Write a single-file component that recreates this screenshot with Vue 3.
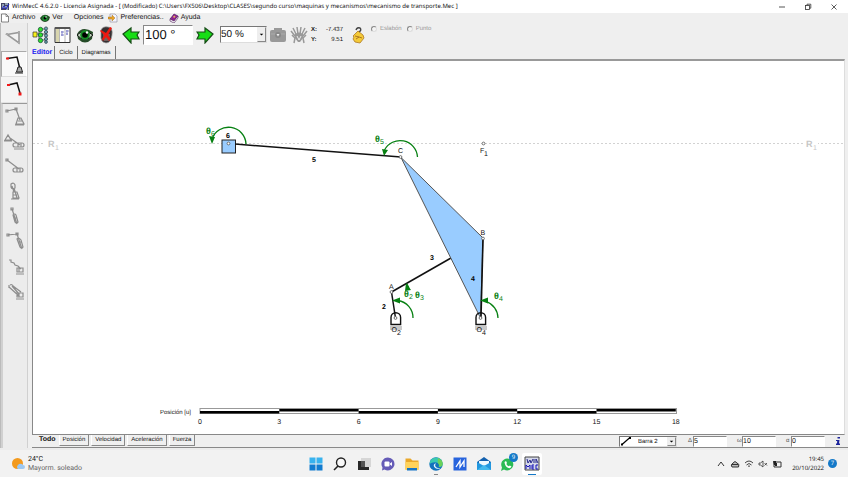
<script setup>
import { ref } from 'vue'

const menus = [
  { label: 'Archivo', icon: 'file' },
  { label: 'Ver', icon: 'eye' },
  { label: 'Opciones', icon: '' },
  { label: 'Preferencias..', icon: 'prefs' },
  { label: 'Ayuda', icon: 'book' },
]
const views = ['Editor', 'Ciclo', 'Diagramas']
const results = ['Todo', 'Posición', 'Velocidad', 'Aceleración', 'Fuerza']
const view = ref('Editor')
const result = ref('Todo')
const angle = ref('100 °')
const zoom = ref('50 %')
const link = ref('Barra 2')
const params = ref([
  { id: 'delta', symbol: 'Δ', value: '5' },
  { id: 'omega', symbol: 'ω', value: '10' },
  { id: 'alpha', symbol: 'α', value: '0' },
])

const pairTools = [
  { name: 'Biela', d: 'M6 5L15 3L19 14 M5 4h2v2H5z M14 2h2v2h-2z M17 12h3l3 6h-8z M14 19h9 M17 15h4' },
  { name: 'Corredera', d: 'M4 9l3-5 3 5z M3 10h8 M9 7l10 7 M14 12h7a2 2 0 0 1 0 4h-7a2 2 0 0 1 0-4z M17 12v4 M20 12v4 M13 18h10' },
  { name: 'Corredera libre', d: 'M6 4l12 9 M5 3h2v2H5z M14 12h6a2 2 0 0 1 0 4h-6a2 2 0 0 1 0-4z M16 12v4 M19 12v4' },
  { name: 'Deslizadera fija', d: 'M10 3q3-2 4 1v3q-3 2-4-1z M13 7l3 10 M11 5l2 6 M12 11h4l2 6h-6z M10 18h8 M12 14h4' },
  { name: 'Deslizadera', d: 'M11 3l5 15 M10 2h2v2h-2z M12 9q2-2 3 0l2 7q-2 2-3 0z M13 12h3' },
  { name: 'Biela con guía', d: 'M7 4l9-1 5 15 M6 3h2v2H6z M15 2h2v2h-2z M16 8q2-2 4 1l2 7q-2 2-3 0z M17 11h3' },
  { name: 'Guía inclinada', d: 'M8 4h2v2l3 1 1 2 3 1 3 3 M16 12h6v4h-6z M18 12v4 M15 18h8' },
  { name: 'Guía doble', d: 'M9 4q2-1 3 1l8 6 M8 6l10 9 M8 4v3 M11 5l7 8 M16 12h6v4h-6z M18 12v4 M15 18h8' },
]

const ticks = [0, 3, 6, 9, 12, 15, 18]
const tickX = (i) => 200 + i * 79.3
</script>

<template>
  <div class="screen">
    <header class="titlebar">
      <svg class="app-icon" viewBox="0 0 9 9"><path fill="#446" d="M0 1h8v7H0z" /><path stroke="#dff" d="M1 3h2M4 2h3M1 5h6M5 7h2" /><path stroke="#22c" d="M1 7l2-3 2 3 3-5" fill="none" /></svg>
      <h1>WinMecC 4.6.2.0 - Licencia Asignada - [ (Modificado) C:\Users\FX506\Desktop\CLASES\segundo curso\maquinas y mecanismos\mecanismo de transporte.Mec ]</h1>
      <div class="window-buttons">
        <button aria-label="Minimizar"><svg viewBox="0 0 8 8"><path d="M1 4h6" stroke="#555" /></svg></button>
        <button aria-label="Restaurar"><svg viewBox="0 0 8 8" fill="none" stroke="#333" stroke-width=".8"><rect x="1.5" y="2.5" width="4" height="4" /><path d="M3 2.500V1.200h3.800v4H5.500" /></svg></button>
        <button aria-label="Cerrar"><svg viewBox="0 0 8 8"><path d="M1.500 1.500l5 5m0-5l-5 5" stroke="#333" stroke-width=".8" /></svg></button>
      </div>
    </header>

    <nav class="menubar">
      <button v-for="m in menus" :key="m.label" :class="{ plain: !m.icon }">
        <svg v-if="m.icon === 'file'" viewBox="0 0 10 10"><path d="M1.500 1h4.500l2.500 2.500V9h-7z" fill="#fff" stroke="#555" stroke-width=".7" /><path d="M6 1v2.500h2.500" fill="none" stroke="#555" stroke-width=".6" /></svg>
        <svg v-else-if="m.icon === 'eye'" viewBox="0 0 10 10"><path d="M0 5Q4-1 10 4L9 7Q5 11 1 7z" fill="#234b24" /><circle cx="5" cy="5.200" r="2.600" fill="#1e9a35" /><circle cx="5" cy="5" r="1.500" /><circle cx="6" cy="4" r=".7" fill="#fff" /></svg>
        <svg v-else-if="m.icon === 'prefs'" viewBox="0 0 10 10"><path d="M2 1h5l2 2v6H2z" fill="#f4f6ff" stroke="#889" stroke-width=".6" /><path d="M0 4h4V2l3 3-3 3V6H0z" fill="#e9a42a" stroke="#96651a" stroke-width=".4" /></svg>
        <svg v-else-if="m.icon === 'book'" viewBox="0 0 10 10"><path d="M1 6l4-5 4 2-4 6z" fill="#8f2392" stroke="#431152" stroke-width=".6" /><path d="M1 6v2l4 2 4-5V3L5 8z" fill="#fff" stroke="#431152" stroke-width=".6" /><path d="M4 4l2-1-1 2" stroke="#ffdf48" fill="none" stroke-width=".7" /></svg>
        {{ m.label }}
      </button>
    </nav>

    <div class="workspace">
      <aside class="palette">
        <button class="tool tall" aria-label="Polígono"><svg viewBox="0 0 28 26"><path d="M7 10.500L19 8.500V19z" fill="#f2f2f2" stroke="#999" stroke-width="1.600" /><path d="M6 9h2v2H6zM18 7h2v2h-2zM18 18h2v2h-2z" fill="#aaa" /></svg></button>
        <button class="tool active" aria-label="Barra fija"><svg viewBox="0 0 28 26"><path d="M7 7.500l10-1.500 3 12" fill="none" stroke="#111" stroke-width="1.500" /><path d="M6 6.500h3v2H6z" fill="#f01818" /><path d="M18 16h3l1.500 5h-6z" fill="#aaa" stroke="#222" /><path d="M15 22h8" stroke="#222" /></svg></button>
        <button class="tool lit" aria-label="Barra"><svg viewBox="0 0 28 26"><path d="M8 8l9-2 3 10" fill="none" stroke="#111" stroke-width="1.500" /><path d="M7 7h3v2H7zM18.500 15.500h3v3h-3z" fill="#f01818" /></svg></button>
        <div class="pair-tools">
          <button v-for="t in pairTools" :key="t.name" class="tool small" :aria-label="t.name">
            <svg viewBox="0 0 28 22"><path :d="t.d" fill="none" stroke="#8d8d8d" stroke-width="1.200" /></svg>
          </button>
        </div>
      </aside>

      <main class="main">
        <div class="toolbar">
          <div class="group icons">
            <button aria-label="Mecanismo"><svg viewBox="0 0 18 18"><path d="M3 8h12M7 3v12M7 3h6M7 14h6" stroke="#444" stroke-width=".8" /><path d="M1 6h4v5H1z" fill="#f6ef1a" stroke="#333" stroke-width=".7" /><g fill="#31df2e" stroke="#143" stroke-width=".7"><circle cx="8.500" cy="3.500" r="2.200" /><circle cx="8.500" cy="9" r="2.200" /><circle cx="8.500" cy="14.500" r="2.200" /></g><g fill="#6ca6b1" stroke="#234" stroke-width=".7"><circle cx="14" cy="2.500" r="1.600" /><circle cx="14" cy="6" r="1.600" /><circle cx="14" cy="9.500" r="1.600" /><circle cx="14" cy="13" r="1.600" /><circle cx="14" cy="16" r="1.400" /></g></svg></button>
            <button aria-label="Tabla"><svg viewBox="0 0 18 18"><path d="M1 1.500h15v15H1z" fill="#fff" stroke="#333" /><path d="M1 2h15" stroke="#555" stroke-width="2" /><path d="M2 3h3v13H2z" fill="#d8d5ae" /><path d="M5.500 3v13M11 3v13" stroke="#888" stroke-width=".6" /><path d="M7 6h3M12 5h3M7 9h3M12 8h2M8 5v5M13 4v5" stroke="#5558b5" stroke-width=".7" /></svg></button>
            <button aria-label="Ver"><svg viewBox="0 0 18 18"><path d="M1 8Q6-1 17 6L16 13Q9 20 2 13z" fill="#254c28" /><path d="M1 9Q8 2 17 9Q9 18 1 9z" fill="#bdd6bb" stroke="#111" /><circle cx="9" cy="9" r="4.800" fill="#168b25" /><circle cx="9" cy="9" r="2.800" /><circle cx="11" cy="6.500" r="1.200" fill="#fff" /></svg></button>
            <button aria-label="Quitar"><svg viewBox="0 0 18 18"><path d="M3 4Q5 0 10 1Q15 1 14 9Q13 17 8 17Q2 16 3 9z" fill="#363032" stroke="#999" stroke-width=".7" /><path d="M5 8h7l-1 7H6z" fill="#70605e" /><path d="M3 4l5 3 4-6 2 1-4 7 3 4-2 2-3-4-3 4-1-2 2-4-4-4z" fill="#ed1710" /></svg></button>
          </div>
          <div class="group stepper">
            <button aria-label="Paso atrás"><svg viewBox="0 0 18 18"><path d="M1 8l8-6v4h8l-2 3 2 4H9v4z" fill="#17dd16" stroke="#164d16" stroke-width="1.200" /></svg></button>
            <input v-model="angle" class="angle" aria-label="Ángulo" />
            <button aria-label="Paso adelante"><svg viewBox="0 0 18 18"><path d="M17 8L9 2v4H1l2 3-2 4h8v4z" fill="#17dd16" stroke="#164d16" stroke-width="1.200" /></svg></button>
          </div>
          <div class="picker zoom">
            <select v-model="zoom" aria-label="Escala"><option>50 %</option><option>100 %</option></select>
            <svg viewBox="0 0 8 8"><path d="M2 3h4L4 5z" /></svg>
          </div>
          <div class="group shots">
            <button aria-label="Captura"><svg viewBox="0 0 18 18"><rect x="1" y="4" width="16" height="12" rx="2" fill="#999" /><path d="M6 4.500V3h6v1.500" fill="none" stroke="#999" stroke-width="2" /><path d="M2 8h14" stroke="#aaa" /><circle cx="9" cy="9" r="3" fill="#888" /><path d="M7.500 8h3L9 10.500z" fill="#eee" /></svg></button>
            <button aria-label="Mover"><svg viewBox="0 0 18 18"><g fill="none" stroke="#999" stroke-width="1.500"><path d="M5 10L1 5M6 8L3 2M8 8L7 1M10 8l1-7M12 8l3-6M13 10l4-5" /><path d="M2 9l3 3-1 5M16 9l-3 3 1 5" /></g><path d="M5 8q4-3 8 0v4l-3 4H8l-3-4z" fill="#999" /><path d="M7 10l2 4 2-4" stroke="#eee" fill="none" /></svg></button>
          </div>
          <dl class="coords"><dt>X:</dt><dd>-7.437</dd><dt>Y:</dt><dd>9.51</dd></dl>
          <button class="hint" aria-label="Ayuda"><svg viewBox="0 0 14 18"><path d="M5 4q1-3 4-2 2 2-1 4l-1 2" fill="none" stroke="#444" stroke-width="1.400" /><path d="M2 10l5-5 5 4 1 3-4 5-5-1-2-3 1-2z" fill="#f4ca38" stroke="#ad7823" stroke-width=".8" /><path d="M4 10l4 1-3 2M8 11l3 1" stroke="#9a631c" fill="none" stroke-width=".8" /></svg></button>
          <fieldset class="targets" disabled>
            <label><input type="radio" name="target" />Eslabón</label>
            <label><input type="radio" name="target" />Punto</label>
          </fieldset>
        </div>

        <div class="tabs top">
          <button v-for="v in views" :key="v" :class="{ on: view === v }" @click="view = v">{{ v }}</button>
        </div>

        <div class="canvas">
          <svg viewBox="33 61 811 373" role="img" aria-label="Mecanismo de transporte">
            <path d="M33 143.500H844" stroke="#d2d2d2" stroke-dasharray="2 2" />
            <rect x="45" y="138" width="15" height="12" fill="#fff" /><rect x="803" y="138" width="15" height="12" fill="#fff" />
            <g class="ground"><text x="48" y="147">R</text><text x="806" y="147">R</text><text class="sub" x="55" y="150">1</text><text class="sub" x="813" y="150">1</text></g>

            <rect x="222" y="140" width="13.500" height="13" fill="#99ccff" stroke="#222" />
            <g class="rods"><path d="M235 144L401 157" /><path d="M391.500 292L451 258" /><path d="M391.500 292L395.500 318" /></g>
            <path d="M401 157.500L483 238L480.500 318z" fill="#99ccff" stroke="#555" />
            <path d="M483 238L481 318" stroke="#111" stroke-width="1.600" />

            <g fill="none" stroke="#111" stroke-width="1.400">
              <path d="M391 324.500v-7a4.800 4.800 0 0 1 9.600 0v7z" /><path d="M476 324.500v-7a4.800 4.800 0 0 1 9.600 0v7z" />
            </g>
            <g fill="#c9c9c9"><path d="M390 326h12v4h-12zM475 326h12v4h-12z" /></g>

            <g class="arcs">
              <path d="M246 144a17.500 17.500 0 0 0-34-5" /><path d="M417.500 157a17.500 17.500 0 0 0-33-7" />
              <path d="M413 318a17.500 17.500 0 0 0-15-17.500" /><path d="M498 318a17.500 17.500 0 0 0-12-16.500" />
              <path d="M409 290q0-3-2-6" />
            </g>
            <g fill="#078012"><path d="M209 136l6 1-3 7zM382 149l6 1-4 6zM392 300.500l8-3v6zM480 300.500l8-3v6zM406 283l5 7-6 1z" /></g>

            <g fill="#fff" stroke="#555" stroke-width=".8">
              <circle cx="228.500" cy="143.500" r="1.400" /><circle cx="400.500" cy="157" r="1.400" /><circle cx="483.500" cy="143.500" r="1.400" />
              <circle cx="483" cy="238.500" r="1.400" /><circle cx="391.500" cy="292" r="1.400" /><circle cx="395.500" cy="318" r="1.400" /><circle cx="480.500" cy="318" r="1.400" />
            </g>

            <g class="points">
              <text x="398" y="153">C</text><text x="480" y="153">F</text><text x="484" y="156">1</text><text x="480.500" y="235">B</text>
              <text x="389" y="289">A</text><text x="391.500" y="332">O</text><text x="397" y="335">2</text><text x="476.500" y="332">O</text><text x="482" y="335">4</text>
            </g>
            <g class="links">
              <text x="226" y="138">6</text><text x="312" y="162">5</text><text x="430" y="260">3</text><text x="471" y="281">4</text><text x="382" y="309">2</text>
            </g>
            <g class="angles">
              <text x="206" y="134">θ<tspan dy="2">6</tspan></text><text x="375" y="142">θ<tspan dy="2">5</tspan></text>
              <text x="404" y="297">θ<tspan dy="2">2</tspan></text><text x="415" y="298">θ<tspan dy="2">3</tspan></text><text x="494" y="299">θ<tspan dy="2">4</tspan></text>
            </g>

            <rect x="200" y="408.500" width="476.500" height="5" fill="#fff" stroke="#999" />
            <rect v-for="i in 6" :key="i" :x="tickX(i - 1)" :y="i % 2 ? 411 : 409" width="79.300" height="2.500" fill="#000" />
            <g class="scale"><text x="160" y="414" class="caption">Posición [u]</text><text v-for="(t, i) in ticks" :key="t" :x="tickX(i)" y="424" class="tick">{{ t }}</text></g>
          </svg>
        </div>

        <footer class="statusbar">
          <div class="tabs bottom">
            <button v-for="r in results" :key="r" :class="{ on: result === r }" @click="result = r">{{ r }}</button>
          </div>
          <div class="picker link">
            <svg class="bar-icon" viewBox="0 0 12 10"><path d="M2 8.500L10 1.500" stroke="#000" stroke-width="1.200" /><path d="M1 7.500h2v2H1zM9 1h2v2H9z" /></svg>
            <select v-model="link" aria-label="Eslabón"><option>Barra 2</option><option>Barra 3</option></select>
            <svg viewBox="0 0 8 8"><path d="M2 3h4L4 5z" /></svg>
          </div>
          <div class="params">
            <div v-for="p in params" :key="p.id"><label :for="p.id">{{ p.symbol }}</label><input :id="p.id" v-model="p.value" /></div>
          </div>
          <button class="info" aria-label="Información"><svg viewBox="0 0 6 10"><path d="M2.500 1h2.500v1.500H2.500zM1 4h3.500L4 7.500h1V9H1V7.500h1L2.200 5H1z" fill="#1c249b" /></svg></button>
        </footer>
      </main>
    </div>

    <div class="taskbar">
      <button class="weather">
        <svg viewBox="0 0 14 14"><circle cx="6.500" cy="6.500" r="5.500" fill="#f39a1e" /><path d="M7 12a2.500 2.500 0 0 1 0-4 3 3 0 0 1 5 0 2 2 0 0 1 0 4z" fill="#9cc8f2" /></svg>
        <span><b>24°C</b><em>Mayorm. soleado</em></span>
      </button>
      <div class="dock">
        <button aria-label="Inicio"><svg viewBox="0 0 16 16"><path d="M1.500 1.500h6v6h-6zM8.500 1.500h6v6h-6z" fill="#38b2ee" /><path d="M1.500 8.500h6v6h-6zM8.500 8.500h6v6h-6z" fill="#127cd0" /></svg></button>
        <button aria-label="Buscar"><svg viewBox="0 0 16 16"><circle cx="9" cy="6.500" r="4.500" fill="#f8f8f8" stroke="#222" stroke-width="1.400" /><path d="M6 10l-4 4" stroke="#222" stroke-width="1.600" /></svg></button>
        <button aria-label="Vista de tareas"><svg viewBox="0 0 16 16"><path d="M5 2h10v9H5z" fill="#d6d6d6" /><path d="M2 5h7v6h4v3H2z" fill="#292929" /><path d="M9 5v6H5V5z" fill="#555" /></svg></button>
        <button aria-label="Chat"><svg viewBox="0 0 16 16"><path d="M8 1.500a6.500 6.500 0 1 1-3.500 12L2 14.500l.5-3A6.500 6.500 0 0 1 8 1.500z" fill="#655bb7" /><rect x="4.500" y="5.500" width="5" height="5" rx="1" fill="#fff" /><path d="M10 7.500l2-1.500v4l-2-1.500z" fill="#fff" /></svg></button>
        <button aria-label="Explorador"><svg viewBox="0 0 16 16"><path d="M1.500 2.500h5l2 2h6v9h-13z" fill="#eaa82a" /><path d="M1.500 6h13v8h-13z" fill="#ffd35b" /><path d="M3 12h10v2.500H3z" fill="#1675c6" /></svg></button>
        <button class="running" aria-label="Edge"><svg viewBox="0 0 16 16"><circle cx="8" cy="8" r="6.700" fill="#1272bd" /><path d="M1.500 8A6.500 6.500 0 0 1 14.700 8q0 3-4 3 2-3-2-4.500-4-1-7.200 1.500z" fill="#39c8b0" /><path d="M10 2q5 2 4.700 6 0 3-4 2.800 1-2-1-4z" fill="#6bd15a" /><path d="M8 7.500q-2 2 .5 4 3 1 4.500 0-2 2-5 1-3-2-2-4 1-1.500 2-1z" fill="#e8f6fb" /></svg></button>
        <button aria-label="MyAsus"><svg viewBox="0 0 16 16"><path d="M1.500 1.500h13v13h-13z" fill="#2864dd" /><path d="M4 11l4-6v6l4-6v6" fill="none" stroke="#fff" stroke-width="1.300" /></svg></button>
        <button aria-label="Correo"><svg viewBox="0 0 16 16"><path d="M1 6l7-5 7 5v8H1z" fill="#1461ae" /><path d="M3 5h10v5H3z" fill="#eef8ff" /><path d="M1 6l7 4 7-4v8H1z" fill="#2297df" /><path d="M1 14l7-5 7 5z" fill="#42b9ee" /></svg></button>
        <button class="badged" aria-label="WhatsApp"><svg viewBox="0 0 16 16"><path d="M7 2.500A6 6 0 1 1 4 13.500L1 15l1-3.500A6 6 0 0 1 7 2.500z" fill="#2abb54" /><path d="M4.500 6l1.500-1 1 2-.7 1q1 1.700 2.500 2.200l1-.8 1.700 1.200q-1 2-3 1.400Q5 11 4.500 6z" fill="#fff" /></svg><i>9</i></button>
        <button class="current" aria-label="WinMecC"><svg viewBox="0 0 16 16"><path d="M1 1h14v13H1z" fill="#d5d8e9" stroke="#444" /><path d="M3 3l1 4 2-3 1 3 2-4M10 3v4M12 7V3l2 4" stroke="#25278c" fill="none" /><path d="M2 13V9l2 2 2-2v4M8 9h2M8 9v4h2M8 11h2M14 9h-2v4h2" stroke="#1713b8" fill="none" /></svg></button>
      </div>
      <div class="tray">
        <button aria-label="Más iconos"><svg viewBox="0 0 10 10"><path d="M2 7l3-4 3 4" fill="none" stroke="#333" /></svg></button>
        <button aria-label="OneDrive"><svg viewBox="0 0 10 10"><path d="M2 8q-2-2 1-4 2-3 4 0 3 1 1.500 4z" fill="#bbb" stroke="#333" /><path d="M2 5.500h6" stroke="#333" /></svg></button>
        <button aria-label="Red"><svg viewBox="0 0 10 10"><path d="M1 4q4-4 8 0M2.500 6q2.500-3 5 0M4 7.500q1-1.500 2 0" fill="none" stroke="#444" /></svg></button>
        <button aria-label="Sonido"><svg viewBox="0 0 10 10"><path d="M1 4h1.500L5 2v6L2.500 6H1zM6.500 4l2.500 2.500M9 4L6.500 6.500" fill="none" stroke="#333" stroke-width=".8" /></svg></button>
        <button aria-label="Batería"><svg viewBox="0 0 10 10"><path d="M2 3h7v5H2z" fill="none" stroke="#333" /><path d="M1 2h3v4H2zM3 4h2v3H3z" fill="#222" /></svg></button>
        <time datetime="2022-10-20T19:45"><span>19:45</span><span>20/10/2022</span></time>
        <span class="count">7</span>
      </div>
    </div>
  </div>
</template>

<style>
body { margin: 0; }
</style>

<style scoped>
.screen { display: flex; flex-direction: column; height: 100vh; overflow: hidden; background: #efefef; color: #111; font: 6px/10px "Liberation Sans", Arial, sans-serif; text-rendering: geometricPrecision; }
.screen * { box-sizing: border-box; }
button, input, select { margin: 0; padding: 0; border: 0; background: none; color: inherit; font: inherit; text-rendering: inherit; }
button { display: flex; align-items: center; justify-content: center; }
svg { display: block; flex: none; }

.titlebar { display: flex; align-items: center; height: 13px; padding: 0 10px 0 1px; background: #fff; }
.app-icon { width: 9px; height: 9px; }
h1 { flex: 1; margin: 0 0 0 2px; overflow: hidden; font: 400 6px/13px "Noto Sans", sans-serif; white-space: nowrap; }
.window-buttons { display: flex; gap: 18px; }
.window-buttons svg { width: 8px; height: 8px; }

.menubar { display: flex; gap: 5px; height: 10px; font-size: 7px; }
.menubar button { gap: 2px; }
.menubar svg { width: 10px; height: 10px; }
.menubar .plain { padding: 0 0 0 6px; }

.workspace { display: flex; flex: 1; min-height: 0; border-bottom: 2px solid #ececec; }
.palette { display: flex; flex-direction: column; width: 28px; margin-right: 4px; border-left: 1px solid #bbb; border-right: 1px solid #d0d0d0; background: #ececec; }
.tool { height: 26px; border-bottom: 1px solid #e2e2e2; }
.tool svg { width: 28px; height: 26px; }
.tall { height: 28px; border: 0; }
.active { border: 1px solid #aaa; border-color: #aaa #fff #ddd #aaa; background: #f9f9f9; }
.lit { background: #f4f4f4; }
.pair-tools { flex: 1; border-top: 1px solid #999; border-left: 2px solid #d0d0d0; }
.small { width: 100%; height: 25px; border: 0; }
.small svg { width: 28px; height: 22px; }

.main { display: flex; flex: 1; flex-direction: column; min-width: 0; }
.toolbar { display: flex; align-items: center; height: 23px; }
.group { display: flex; align-items: center; }
.toolbar .group svg { width: 18px; height: 18px; }
.icons { gap: 4px; }
.stepper { gap: 3px; margin: 0 6px; }
.angle { width: 50px; height: 20px; padding: 0 1px; border: 1px solid #888; border-color: #888 #fff #fff #888; background: #fff; font: 13px/18px "Liberation Sans", sans-serif; }
.picker { display: flex; align-items: center; border: 1px solid #888; border-color: #777 #ddd #ddd #777; background: #fff; }
.picker select { flex: 1; min-width: 0; height: 100%; padding: 0 1px; appearance: none; outline: 0; }
.picker > svg:last-child { width: 9px; height: 100%; border: 1px solid #999; border-color: #eee #888 #888 #eee; background: #eee; }
.zoom { width: 47px; height: 17px; }
.zoom select { padding: 0; font: 10px/15px "Liberation Sans", sans-serif; }
.shots { gap: 3px; margin: 0 3px 0 2px; }
.coords { display: grid; grid-template-columns: auto 1fr; width: 32px; margin: 0 8px 0 0; line-height: 10px; }
dt { font-weight: 700; }
dd { margin: 0; text-align: right; }
.hint svg { width: 14px; height: 18px; }
.targets { display: flex; align-self: flex-start; gap: 5px; margin: 0 0 0 6px; padding: 0; border: 0; color: #999; }
.targets label { display: flex; align-items: center; gap: 3px; height: 12px; }
.targets input { width: 6px; height: 6px; appearance: none; border: 1px solid #999; border-color: #888 #ddd #ddd #888; border-radius: 50%; background: #f4f4f4; }

.tabs { display: flex; }
.tabs button { padding: 0 4px; white-space: nowrap; }
.top { height: 13px; }
.top button { border-right: 1px solid #777; }
.top .on { padding: 0 2px 0 0; color: #1a1af0; font: 700 7px/12px "Liberation Sans", sans-serif; }
.canvas { flex: 1; min-height: 0; margin-right: 3px; border: 1px solid #888; border-top: 2px solid #999; border-right-color: #ddd; background: #fff; }
.canvas svg { width: 100%; height: 100%; }
.canvas text { font: 7px "Liberation Sans", sans-serif; fill: #111; }
.canvas .ground text { font-size: 9px; font-weight: 700; fill: #c6c6c6; }
.canvas .ground .sub { font-size: 7px; font-weight: 400; }
.canvas .links text { font-weight: 700; fill: #000; }
.canvas .angles text { font-size: 9px; font-weight: 700; fill: #078012; }
.canvas .angles tspan { font-size: 7px; font-weight: 400; }
.canvas .caption { font-size: 6px; }
.canvas .tick { text-anchor: middle; }
.rods { fill: none; stroke: #111; stroke-width: 1.5; }
.arcs { fill: none; stroke: #078012; stroke-width: 1.3; }

.statusbar { display: flex; align-items: center; height: 13px; border-bottom: 1px solid #888; }
.bottom { flex: 1; gap: 2px; align-self: flex-start; }
.bottom button { height: 11px; padding: 0 3px; border: 1px solid #888; border-top: 0; border-left-color: #fff; line-height: 10px; }
.bottom .on { padding: 0 0 0 6px; border-color: transparent; font: 700 7px/10px "Liberation Sans", sans-serif; }
.link { width: 58px; height: 11px; }
.bar-icon { width: 12px; height: 10px; }
.link select { padding-left: 6px; }
.params { display: flex; gap: 10px; margin-left: 11px; }
.params div { display: flex; align-items: center; }
.params label { width: 5px; color: #555; }
.params input { width: 34px; height: 11px; border: 1px solid #888; border-color: #888 #fff #fff #888; background: #fff; font: 7px/9px "Liberation Sans", sans-serif; }
.info { width: 6px; margin: 0 7px 0 10px; }
.info svg { width: 6px; height: 10px; }

.taskbar { display: grid; grid-template-columns: 1fr auto 1fr; align-items: center; height: 27px; padding: 0 11px; background: #f2f2f2; font: 6px/9px "Open Sans", sans-serif; }
.weather { justify-content: flex-start; gap: 3px; font: 7px/9px Roboto, sans-serif; text-align: left; }
.weather svg { width: 14px; height: 14px; }
.weather b, .weather em { display: block; font-weight: 400; font-style: normal; }
.weather em { color: #666; }
.dock { display: flex; gap: 4px; }
.dock button { position: relative; width: 20px; height: 22px; }
.dock svg { width: 16px; height: 16px; }
.dock .current { border-radius: 2px; background: #fff; }
.running::after, .current::after { content: ""; position: absolute; bottom: 0; width: 4px; height: 1px; background: #888; }
.current::after { width: 8px; background: #1479c8; }
.dock i, .count { display: flex; align-items: center; justify-content: center; border-radius: 50%; background: #1479c8; color: #fff; font-style: normal; }
.dock i { position: absolute; top: 0; right: 0; width: 9px; height: 9px; line-height: 9px; }
.tray { display: flex; align-items: center; justify-content: flex-end; gap: 4px; }
.tray svg { width: 10px; height: 10px; }
.tray time { margin-left: 6px; text-align: right; }
.tray time span { display: block; }
.count { width: 9px; height: 9px; }
</style>
